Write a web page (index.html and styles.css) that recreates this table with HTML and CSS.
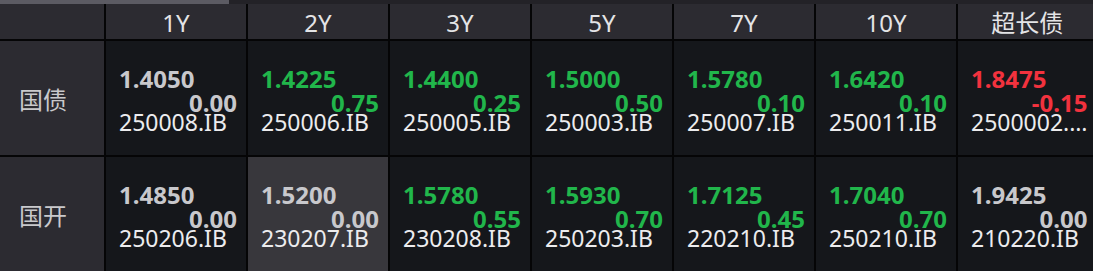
FILE: index.html
```html
<!DOCTYPE html>
<html lang="zh">
<head>
<meta charset="utf-8">
<title>Bond yields</title>
<link rel="stylesheet" href="styles.css">
</head>
<body>
<div class="scroll"><div class="thumb"></div></div>
<div class="grid">
  <div class="hd corner"></div>
  <div class="hd">1Y</div>
  <div class="hd">2Y</div>
  <div class="hd">3Y</div>
  <div class="hd">5Y</div>
  <div class="hd">7Y</div>
  <div class="hd">10Y</div>
  <div class="hd">超长债</div>

  <div class="label">国债</div>
  <div class="cell"><div class="px flat">1.4050</div><div class="chg flat">0.00</div><div class="code">250008.IB</div></div>
  <div class="cell"><div class="px up">1.4225</div><div class="chg up">0.75</div><div class="code">250006.IB</div></div>
  <div class="cell"><div class="px up">1.4400</div><div class="chg up">0.25</div><div class="code">250005.IB</div></div>
  <div class="cell"><div class="px up">1.5000</div><div class="chg up">0.50</div><div class="code">250003.IB</div></div>
  <div class="cell"><div class="px up">1.5780</div><div class="chg up">0.10</div><div class="code">250007.IB</div></div>
  <div class="cell"><div class="px up">1.6420</div><div class="chg up">0.10</div><div class="code">250011.IB</div></div>
  <div class="cell"><div class="px down">1.8475</div><div class="chg down">-0.15</div><div class="code">2500002.…</div></div>

  <div class="label">国开</div>
  <div class="cell"><div class="px flat">1.4850</div><div class="chg flat">0.00</div><div class="code">250206.IB</div></div>
  <div class="cell sel"><div class="px flat">1.5200</div><div class="chg flat">0.00</div><div class="code">230207.IB</div></div>
  <div class="cell"><div class="px up">1.5780</div><div class="chg up">0.55</div><div class="code">230208.IB</div></div>
  <div class="cell"><div class="px up">1.5930</div><div class="chg up">0.70</div><div class="code">250203.IB</div></div>
  <div class="cell"><div class="px up">1.7125</div><div class="chg up">0.45</div><div class="code">220210.IB</div></div>
  <div class="cell"><div class="px up">1.7040</div><div class="chg up">0.70</div><div class="code">250210.IB</div></div>
  <div class="cell"><div class="px flat">1.9425</div><div class="chg flat">0.00</div><div class="code">210220.IB</div></div>
</div>
</body>
</html>
```
FILE: styles.css
```css
* { box-sizing: border-box; }
html, body {
  margin: 0;
  padding: 0;
  background: #050506;
  width: 1093px;
  height: 271px;
  overflow: hidden;
  font-family: "Noto Sans", "Noto Sans CJK SC", sans-serif;
}
.scroll {
  height: 4px;
  background: #232227;
}
.thumb {
  width: 229px;
  height: 4px;
  background: #5c5b63;
}
.grid {
  display: grid;
  grid-template-columns: 104px repeat(6, 140px) 1fr;
  grid-template-rows: 35px 114px 114px;
  column-gap: 2px;
  row-gap: 2px;
  background: #050506;
}
.hd {
  background: #2c2b31;
  color: #e4e4e6;
  font-size: 24px;
  line-height: 33px;
  padding-top: 2px;
  text-align: center;
}
.label {
  background: #2c2b31;
  color: #c9c9cc;
  font-size: 24px;
  display: flex;
  align-items: center;
  padding-left: 19px;
  font-family: "Noto Sans CJK SC", sans-serif;
}
.cell {
  background: #15171b;
  padding: 26px 9px 0 13px;
  display: flex;
  flex-direction: column;
}
.cell.sel { background: #38373c; }
.px {
  font-size: 24px;
  font-weight: 700;
  line-height: 24px;
}
.chg {
  font-size: 24px;
  font-weight: 700;
  line-height: 19px;
  margin-top: 2px;
  text-align: right;
}
.code {
  font-size: 23px;
  line-height: 20px;
  color: #ececee;
  white-space: nowrap;
}
.flat { color: #c8c8cc; }
.up { color: #21b64b; }
.down { color: #f2323e; }
```
